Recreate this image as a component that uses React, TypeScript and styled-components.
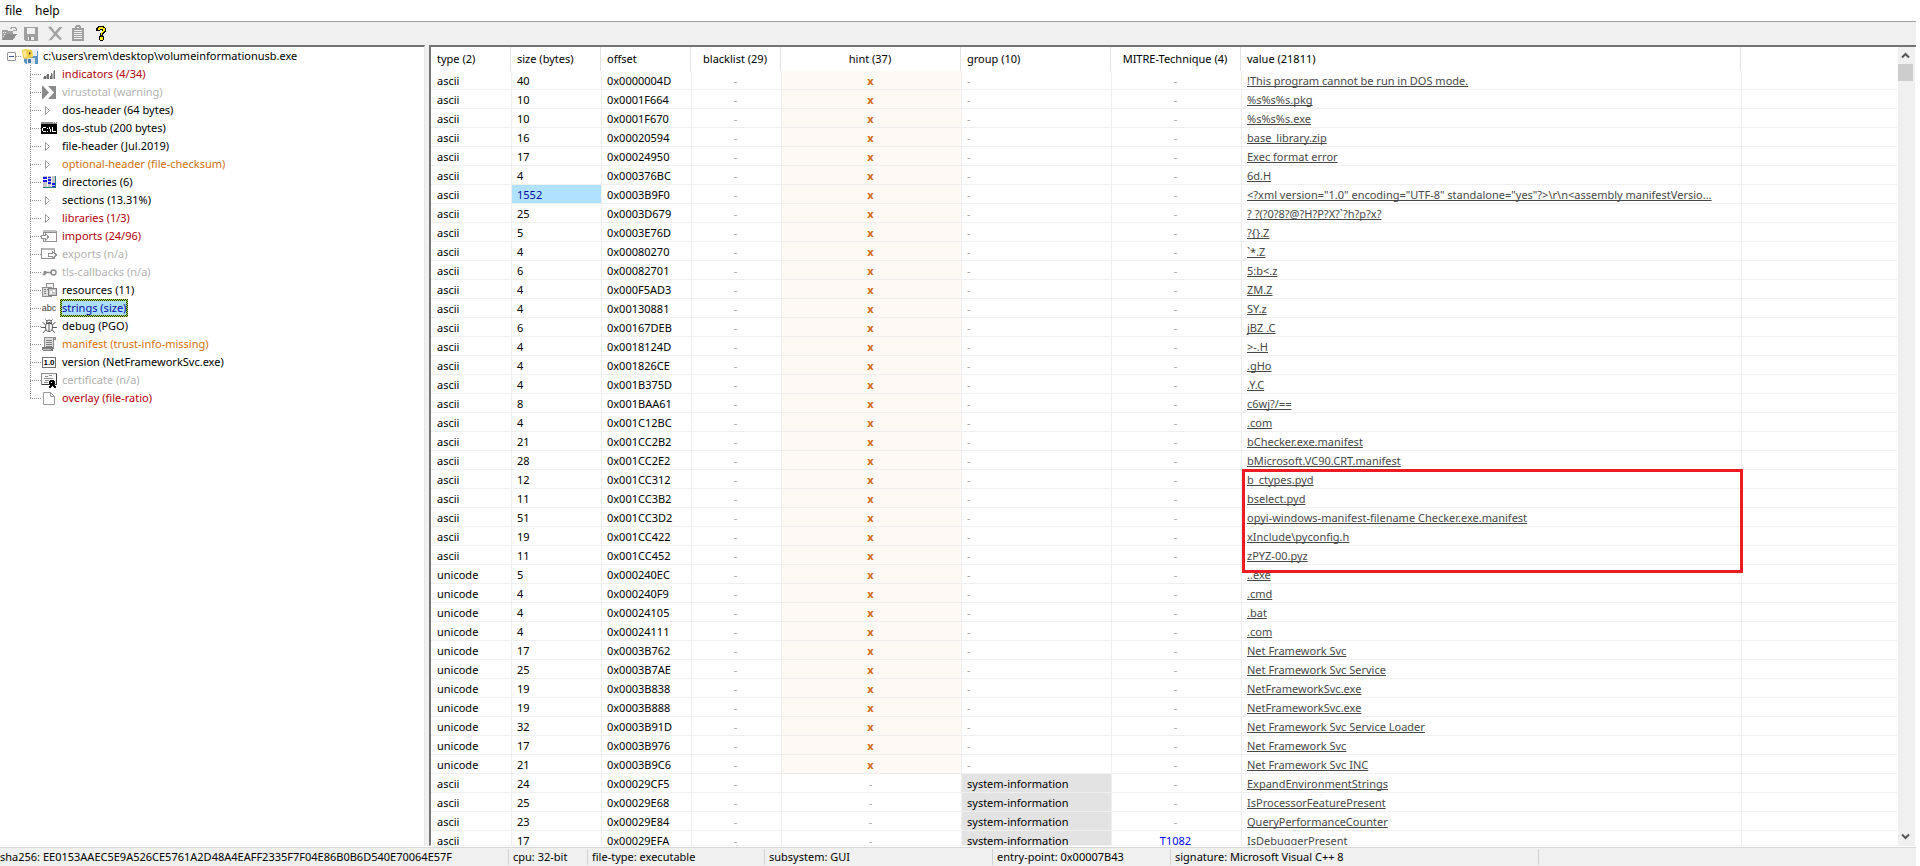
import React from "react";
import styled, { createGlobalStyle, css } from "styled-components";

const GlobalStyle = createGlobalStyle`
  * { box-sizing: border-box; }
  body {
    margin: 0;
    background: #fff;
    color: #000;
    font-family: "Noto Sans", "Open Sans", sans-serif;
    font-size: 11px;
    line-height: 18px;
  }
  button { font: inherit; color: inherit; border: 0; background: none; padding: 0; margin: 0; }
  svg { display: block; flex: none; }
`;

const tones = {
  normal: "#000",
  alert: "#b3000c",
  warn: "#d2700f",
  off: "#b2b2b2",
  selected: "#0a0aa8",
};
type Tone = keyof typeof tones;

/* ---------- window ---------- */

const Window = styled.div`
  display: flex;
  flex-direction: column;
  height: 100vh;
  padding-right: 4px;
  overflow: hidden;
`;

const MenuBar = styled.nav`
  display: flex;
  flex: none;
  gap: 13px;
  height: 21px;
  padding: 2px 5px;
`;

const MenuItem = styled.button`
  line-height: 18px;
  font-size: 12px;
`;

const ToolBar = styled.div`
  display: flex;
  flex: none;
  align-items: center;
  gap: 7px;
  height: 24px;
  border-top: 1px solid #a0a0a0;
  background: #f0f0f0;
`;

const ToolButton = styled.button`
  width: 17px;
  height: 17px;
`;

const Panes = styled.main`
  display: flex;
  flex: 1;
  min-height: 0;
  background: #f0f0f0;
`;

/* ---------- tree ---------- */

const TreePane = styled.aside`
  flex: none;
  width: 425px;
  background: #fff;
  border-top: 2px solid #747474;
  border-right: 1px solid #e6e6e6;
  border-bottom: 1px solid #f0f0f0;
  overflow: hidden;
`;

const RootRow = styled.div`
  display: flex;
  align-items: center;
  height: 18px;
  padding-left: 7px;
`;

const Toggle = styled.button`
  display: flex;
  align-items: center;
  justify-content: center;
  width: 9px;
  height: 9px;
  border: 1px solid #969696;
  border-radius: 1px;
  &::before { content: ""; width: 5px; height: 1px; background: #3c5a96; }
`;

const Dots = styled.span<{ $width: number }>`
  width: ${(p) => p.$width}px;
  height: 1px;
  flex: none;
  background: repeating-linear-gradient(90deg, #909090 0 1px, transparent 1px 2px);
`;

const RootLabel = styled.span`
  margin-left: 5px;
`;

const Branches = styled.ul`
  list-style: none;
  margin: 0;
  padding: 0 0 0 30px;
`;

const Branch = styled.li`
  display: flex;
  align-items: center;
  height: 18px;
  background: repeating-linear-gradient(180deg, #909090 0 1px, transparent 1px 2px) 0 0 / 1px 100% no-repeat;
  &:last-child { background-size: 1px 50%; }
`;

const BranchLabel = styled.button<{ $tone: Tone }>`
  margin-left: 3px;
  padding: 0 2px;
  line-height: 18px;
  color: ${(p) => tones[p.$tone]};
  ${(p) =>
    p.$tone === "selected" &&
    css`
      line-height: 14px;
      border: 2px solid transparent;
      padding: 0;
      background:
        linear-gradient(#abdfff, #abdfff) padding-box,
        repeating-conic-gradient(#20300a 0 25%, #b4e05a 0 50%) 0 0 / 2px 2px border-box;
    `}
`;

/* ---------- strings table ---------- */

const TablePane = styled.section`
  display: flex;
  flex: 1;
  min-width: 0;
  margin-left: 4px;
  background: #fff;
  border-top: 2px solid #747474;
  border-left: 2px solid #747474;
  border-bottom: 1px solid #f0f0f0;
  overflow: hidden;
`;

const TableView = styled.div`
  position: relative;
  flex: 1;
  min-width: 0;
  overflow: hidden;
`;

const Table = styled.table`
  width: 100%;
  table-layout: fixed;
  border-collapse: separate;
  border-spacing: 0;
`;

const Col = styled.col<{ $width?: number }>`
  width: ${(p) => (p.$width ? `${p.$width}px` : "auto")};
`;

const HeadCell = styled.th<{ $center?: boolean }>`
  height: 24px;
  padding: ${(p) => (p.$center ? "0 6px 0 5px" : "0 5px 0 6px")};
  border-right: 1px solid #e3e3e3;
  font-weight: 400;
  white-space: nowrap;
  text-align: ${(p) => (p.$center ? "center" : "left")};
  &:last-child { border-right: 0; }
`;

const fills = { none: "transparent", hint: "#fff9f5", group: "#e3e3e3", size: "#b0e2ff" };

const Cell = styled.td<{ $center?: boolean; $fill?: keyof typeof fills; $color?: string }>`
  height: 19px;
  padding: ${(p) => (p.$center ? "1px 7px 0 5px" : "1px 5px 0")};
  border-left: 1px solid #efefef;
  border-bottom: 1px solid #efefef;
  overflow: hidden;
  line-height: 17px;
  white-space: nowrap;
  text-align: ${(p) => (p.$center ? "center" : "left")};
  background: ${(p) => fills[p.$fill ?? "none"]};
  color: ${(p) => p.$color ?? "#000"};
  &:first-child { border-left: 0; padding-left: 6px; }
`;

const HintMark = styled.b`
  color: #cf6a10;
`;

const ValueLink = styled.a`
  color: #484848;
  text-decoration: underline;
  text-decoration-skip-ink: none;
  text-underline-offset: 1px;
`;

const Marker = styled.div`
  position: absolute;
  left: 811px;
  top: 422px;
  width: 501px;
  height: 104px;
  border: 3px solid #ed1c24;
  pointer-events: none;
`;

const ScrollBar = styled.div`
  display: flex;
  flex: none;
  flex-direction: column;
  width: 17px;
  margin: 0 1px;
  background: #f0f0f0;
`;

const ScrollArrow = styled.button`
  display: flex;
  flex: none;
  align-items: center;
  justify-content: center;
  width: 15px;
  height: 17px;
`;

const ScrollTrack = styled.div`
  flex: 1;
`;

const ScrollThumb = styled.div`
  width: 15px;
  height: 17px;
  background: #cdcdcd;
`;

/* ---------- status bar ---------- */

const StatusBar = styled.footer`
  display: flex;
  flex: none;
  height: 19px;
  margin-top: 1px;
  padding-top: 1px;
  border-top: 1px solid #d7d7d7;
  background: #f0f0f0;
`;

const StatusCell = styled.span<{ $width?: number }>`
  flex: ${(p) => (p.$width ? `none` : "1")};
  width: ${(p) => (p.$width ? `${p.$width}px` : "auto")};
  height: 16px;
  padding-left: 4px;
  border-left: 1px solid #d2d2d2;
  line-height: 16px;
  white-space: nowrap;
  &:first-child { border-left: 0; padding-left: 0; }
`;

/* ---------- icons ---------- */

const Ico = ({ children, size = 16 }: { children: React.ReactNode; size?: number }) => (
  <svg width={size} height={size} viewBox={`0 0 ${size} ${size}`} shapeRendering="crispEdges" aria-hidden="true">
    {children}
  </svg>
);

const OpenIcon = () => (
  <Ico size={17}>
    <path d="M2 5h5l1 1h5v3H6l-4 6z" fill="#a0a0a0" />
    <path d="M6 9h11l-4 6H2z" fill="#8f8f8f" />
    <path d="M3 7h1v1H3zM5 7h1v1H5zM4 9h1v1H4zM3 11h1v1H3z" fill="#f0f0f0" />
    <path d="M10 3h1V2h4v1h1v3M13 5h4" stroke="#a0a0a0" fill="none" />
  </Ico>
);
const SaveIcon = () => (
  <Ico size={17}>
    <path d="M0 2h14v14H1l-1-1z" fill="#a0a0a0" />
    <path d="M3 3h8v6H3z" fill="#f0f0f0" />
    <path d="M4 12h6v3H4z" fill="#f0f0f0" />
    <path d="M5 12h2v3H5z" fill="#8a8a8a" />
  </Ico>
);
const DeleteIcon = () => (
  <svg width="17" height="17" viewBox="0 0 17 17" aria-hidden="true">
    <path d="M0 2l3-.5 4 5.500 4.500-5h3L9 8.500l5 5.500-2 1L7.500 10.500 3.500 15l-3 .5L6 9z" fill="#a0a0a0" />
  </svg>
);
const ClipIcon = () => (
  <Ico size={17}>
    <path d="M0 3h3V1h1V0h4v1h1v2h3v13H0z" fill="#a0a0a0" />
    <path d="M2 5h8v1H2zM2 7h8v1H2zM2 9h8v1H2zM2 11h8v1H2zM2 13h8v1H2zM5 2h2v1H5z" fill="#f0f0f0" />
  </Ico>
);
const HelpIcon = () => (
  <Ico size={17}>
    <path d="M2 2h1V1h6v1h1v1h1v4h-1v1H9v1H8v2h1v4H8v1H5v-1H4v-4h1V8h1V7h1V5H5v1H1V3h1z" fill="#000" transform="translate(-1 0)" />
    <path d="M2 3h1V2h4v1h2v3H8v1H7v1H6v2H5V7h1V6h1V4H4v1H2z" fill="#ffee00" />
    <path d="M4 12h3v3H4z" fill="#ffee00" />
  </Ico>
);
const DiskIcon = () => (
  <svg width="16" height="16" viewBox="0 0 16 16" aria-hidden="true">
    <path d="M2 3h14v13H4l-2-2z" fill="#5b95c4" />
    <path d="M5 10h8v6H5z" fill="#dfe6ee" />
    <path d="M6 11h3v4H6z" fill="#4878a4" />
    <path d="M9 1h6v7H9z" fill="#e8eef4" />
    <path d="M0 2l4-1 6 1 1 7-7 2-3-1z" fill="#f6cf4a" />
    <path d="M1 3l3-1 1 7-3 1z" fill="#fbe694" />
    <path d="M7 4l2 1-2 2z" fill="#3c3c3c" />
  </svg>
);
const BarsIcon = () => (
  <Ico>
    <path d="M3 10h2v3H3zM6 8h2v5H6zM9 10h1v3H9zM10 7h1v6h-1zM13 4h1v9h-1z" fill="#6c6c6c" />
    <path d="M2 11h1v2H2zM5 9h1v4H5zM11 8h1v5h-1zM12 5h1v8h-1z" fill="#b0b0b0" />
  </Ico>
);
const VirusIcon = () => (
  <svg width="16" height="16" viewBox="0 0 16 16" aria-hidden="true">
    <path d="M1 2h14v13H1z" fill="#8a8a8a" />
    <path d="M2 2h5l6 6.500L7 15H2l6-6.500z" fill="#fff" />
  </svg>
);
const ArrowIcon = () => (
  <svg width="16" height="16" viewBox="0 0 16 16" aria-hidden="true">
    <path d="M4.500 4.500v8l4-4z" fill="#fff" stroke="#a0a0a0" />
  </svg>
);
const ConsoleIcon = () => (
  <Ico>
    <path d="M0 2h16v12H0z" fill="#000" />
    <path d="M0 2h16v2H0z" fill="#8a8a8a" />
    <path d="M12 2h1v1h-1zM14 2h1v1h-1z" fill="#fff" />
    <path d="M2 7h3v1H2zM2 11h3v1H2zM1 8h1v3H1zM6 8h1v1H6zM6 11h1v1H6zM8 7h1v2H8zM9 9h1v3H9zM11 7h1v5h-1zM12 11h3v1h-3z" fill="#fff" />
  </Ico>
);
const DirIcon = () => (
  <Ico>
    <path d="M2 2h13v12H2z" fill="#c6c6c6" />
    <path d="M2 3h4v2H2zM2 6h4v2H2zM7 5h4v2H7zM7 8h4v2H7zM7 3h3v1H7zM11 9h3v2h-3zM11 12h3v1h-3z" fill="#1414e6" />
    <path d="M6 2h1v12H6zM10 2h1v12h-1zM2 5h4v1H2z" fill="#f4f4f4" />
    <path d="M14 2h1v12h-1zM2 13h13v1H2z" fill="#2a8080" />
  </Ico>
);
const ImportIcon = () => (
  <Ico>
    <path d="M2 3h14v11H2z" fill="#909090" />
    <path d="M3 5h12v8H3z" fill="#fff" />
    <path d="M2 2h13v2H2z" fill="#c2c2c2" />
    <path d="M0 6h2v6H0z" fill="#fff" />
    <path d="M0.500 7.500h4v-2l3 3.500-3 3.500v-2h-4z" fill="#fff" stroke="#909090" />
  </Ico>
);
const ExportIcon = () => (
  <Ico>
    <path d="M0 2h14v11H0z" fill="#909090" />
    <path d="M1 4h12v8H1z" fill="#fff" />
    <path d="M1 2h13v2H1z" fill="#b8b8b8" />
    <path d="M7.500 7.500h4v-2l4 3.500-4 3.500v-2h-4z" fill="#fff" stroke="#909090" />
  </Ico>
);
const TlsIcon = () => (
  <svg width="16" height="16" viewBox="0 0 16 16" fill="none" stroke="#8c8c8c" strokeWidth="1.500" aria-hidden="true">
    <circle cx="12.500" cy="8.500" r="2.500" />
    <path d="M10 8.500H4M1.500 10.500h3" />
    <circle cx="4" cy="8.500" r="1" />
  </svg>
);
const ResourceIcon = () => (
  <Ico>
    <path d="M5.500 1.500h7v6h-7z" stroke="#909090" fill="#f2f2f2" />
    <path d="M1.500 5.500h9v9h-9z" stroke="#909090" fill="#dcdcdc" />
    <path d="M3 7h2v1H3zM6 7h2v1H6zM3 9h2v1H3zM3 11h2v1H3z" fill="#808080" />
    <path d="M7.500 6.500h8v7h-8z" stroke="#808080" fill="#c8c8c8" />
    <path d="M9 9h2v3H9zM12 8h2v2h-2z" fill="#fff" />
  </Ico>
);
const AbcBadge = styled.span`
  width: 16px;
  flex: none;
  color: #3c3c3c;
  font-family: "Liberation Sans", sans-serif;
  font-size: 9px;
  text-align: center;
`;
const BugIcon = () => (
  <svg width="16" height="16" viewBox="0 0 16 16" fill="none" stroke="#5a5a5a" aria-hidden="true">
    <ellipse cx="8" cy="9" rx="3.500" ry="4.500" fill="#f4f4f4" />
    <path d="M8 6v7M5 5.500h6M5.500 5a2.500 3 0 0 1 5 0M4.500 1.500L6 3M11.500 1.500L10 3M4.500 7L1.500 4M11.500 7L14.500 4M4.500 9.500H0M11.500 9.500H16M5 11.500L2 15M11 11.500L14 15" />
  </svg>
);
const ManifestIcon = () => (
  <Ico>
    <path d="M3 1h12v3h-2v9H3z" fill="#8c8c8c" />
    <path d="M1 11h11v4H2l-1-1z" fill="#7c7c7c" />
    <path d="M4 2h8v9H4z" fill="#dcdcdc" />
    <path d="M5 4h6v1H5zM5 6h6v1H5zM5 8h6v1H5zM5 10h6v1H5z" fill="#808080" />
    <path d="M13 2h1v1h-1zM2 13h8v1H2z" fill="#c8c8c8" />
  </Ico>
);
const VersionBadge = styled.span`
  width: 14px;
  height: 11px;
  margin: 0 1px;
  flex: none;
  border: 1px solid #707070;
  font-family: "Liberation Sans", sans-serif;
  font-size: 8px;
  font-weight: 700;
  line-height: 9px;
  text-align: center;
`;
const CertIcon = () => (
  <Ico>
    <path d="M0 1h16v12H0z" fill="#8c8c8c" />
    <path d="M1 2h14v10H1z" fill="#f4f4f4" />
    <path d="M15 2h1v11h-1zM1 12h14v1H1z" fill="#3c3c3c" />
    <path d="M4 4h3v1H4zM8 3h3v1H8zM3 6h9v1H3zM4 8h4v1H4zM3 10h4v1H3z" fill="#909090" />
    <path d="M9 8h4v1h1v3h-1v1h1v1h1v2h-2v-1h-1v-1h-1v1h-1v1H8v-2h1v-2H8V9h1z" fill="#000" />
    <path d="M10 10h1v1h-1z" fill="#fff" />
  </Ico>
);
const PageIcon = () => (
  <svg width="16" height="16" viewBox="0 0 16 16" fill="#fff" stroke="#9a9a9a" aria-hidden="true">
    <path d="M2.500 2.500h7l4 4v8h-11zM9.500 2.500v4h4" />
  </svg>
);
const Chevron = ({ up }: { up?: boolean }) => (
  <svg width="9" height="9" viewBox="0 0 9 9" fill="none" stroke="#555" strokeWidth="2" aria-hidden="true">
    <path d={up ? "M1 6.500l3.500-3.500L8 6.500" : "M1 2.500L4.500 6 8 2.500"} />
  </svg>
);

/* ---------- data ---------- */

const branches: [React.ReactNode, string, Tone][] = [
  [<BarsIcon />, "indicators (4/34)", "alert"],
  [<VirusIcon />, "virustotal (warning)", "off"],
  [<ArrowIcon />, "dos-header (64 bytes)", "normal"],
  [<ConsoleIcon />, "dos-stub (200 bytes)", "normal"],
  [<ArrowIcon />, "file-header (Jul.2019)", "normal"],
  [<ArrowIcon />, "optional-header (file-checksum)", "warn"],
  [<DirIcon />, "directories (6)", "normal"],
  [<ArrowIcon />, "sections (13.31%)", "normal"],
  [<ArrowIcon />, "libraries (1/3)", "alert"],
  [<ImportIcon />, "imports (24/96)", "alert"],
  [<ExportIcon />, "exports (n/a)", "off"],
  [<TlsIcon />, "tls-callbacks (n/a)", "off"],
  [<ResourceIcon />, "resources (11)", "normal"],
  [<AbcBadge>abc</AbcBadge>, "strings (size)", "selected"],
  [<BugIcon />, "debug (PGO)", "normal"],
  [<ManifestIcon />, "manifest (trust-info-missing)", "warn"],
  [<VersionBadge>1.0</VersionBadge>, "version (NetFrameworkSvc.exe)", "normal"],
  [<CertIcon />, "certificate (n/a)", "off"],
  [<PageIcon />, "overlay (file-ratio)", "alert"],
];

const columns: { label: string; width?: number; center?: boolean }[] = [
  { label: "type (2)", width: 80 },
  { label: "size (bytes)", width: 90 },
  { label: "offset", width: 90 },
  { label: "blacklist (29)", width: 90, center: true },
  { label: "hint (37)", width: 180, center: true },
  { label: "group (10)", width: 150 },
  { label: "MITRE-Technique (4)", width: 130, center: true },
  { label: "value (21811)", width: 500 },
  { label: "" },
];

type StringRow = { type: string; size: number; offset: string; value: string; group?: string; mitre?: string };
const s = (type: string, size: number, offset: string, value: string, group?: string, mitre?: string): StringRow => ({
  type, size, offset, value, group, mitre,
});

const rows: StringRow[] = [
  s("ascii", 40, "0x0000004D", "!This program cannot be run in DOS mode."),
  s("ascii", 10, "0x0001F664", "%s%s%s.pkg"),
  s("ascii", 10, "0x0001F670", "%s%s%s.exe"),
  s("ascii", 16, "0x00020594", "base_library.zip"),
  s("ascii", 17, "0x00024950", "Exec format error"),
  s("ascii", 4, "0x000376BC", "6d.H"),
  s("ascii", 1552, "0x0003B9F0", '<?xml version="1.0" encoding="UTF-8" standalone="yes"?>\\r\\n<assembly manifestVersio...'),
  s("ascii", 25, "0x0003D679", "? ?(?0?8?@?H?P?X?`?h?p?x?"),
  s("ascii", 5, "0x0003E76D", "?{}.Z"),
  s("ascii", 4, "0x00080270", "`*.Z"),
  s("ascii", 6, "0x00082701", "5:b<.z"),
  s("ascii", 4, "0x000F5AD3", "ZM.Z"),
  s("ascii", 4, "0x00130881", "SY.z"),
  s("ascii", 6, "0x00167DEB", "jBZ .C"),
  s("ascii", 4, "0x0018124D", ">-.H"),
  s("ascii", 4, "0x001826CE", ".gHo"),
  s("ascii", 4, "0x001B375D", ".Y.C"),
  s("ascii", 8, "0x001BAA61", "c6wj?/=="),
  s("ascii", 4, "0x001C12BC", ".com"),
  s("ascii", 21, "0x001CC2B2", "bChecker.exe.manifest"),
  s("ascii", 28, "0x001CC2E2", "bMicrosoft.VC90.CRT.manifest"),
  s("ascii", 12, "0x001CC312", "b_ctypes.pyd"),
  s("ascii", 11, "0x001CC3B2", "bselect.pyd"),
  s("ascii", 51, "0x001CC3D2", "opyi-windows-manifest-filename Checker.exe.manifest"),
  s("ascii", 19, "0x001CC422", "xInclude\\pyconfig.h"),
  s("ascii", 11, "0x001CC452", "zPYZ-00.pyz"),
  s("unicode", 5, "0x000240EC", "..exe"),
  s("unicode", 4, "0x000240F9", ".cmd"),
  s("unicode", 4, "0x00024105", ".bat"),
  s("unicode", 4, "0x00024111", ".com"),
  s("unicode", 17, "0x0003B762", "Net Framework Svc"),
  s("unicode", 25, "0x0003B7AE", "Net Framework Svc Service"),
  s("unicode", 19, "0x0003B838", "NetFrameworkSvc.exe"),
  s("unicode", 19, "0x0003B888", "NetFrameworkSvc.exe"),
  s("unicode", 32, "0x0003B91D", "Net Framework Svc Service Loader"),
  s("unicode", 17, "0x0003B976", "Net Framework Svc"),
  s("unicode", 21, "0x0003B9C6", "Net Framework Svc INC"),
  s("ascii", 24, "0x00029CF5", "ExpandEnvironmentStrings", "system-information"),
  s("ascii", 25, "0x00029E68", "IsProcessorFeaturePresent", "system-information"),
  s("ascii", 23, "0x00029E84", "QueryPerformanceCounter", "system-information"),
  s("ascii", 17, "0x00029EFA", "IsDebuggerPresent", "system-information", "T1082"),
];

const status: [string, number?][] = [
  ["sha256: EE0153AAEC5E9A526CE5761A2D48A4EAFF2335F7F04E86B0B6D540E70064E57F", 508],
  ["cpu: 32-bit", 79],
  ["file-type: executable", 177],
  ["subsystem: GUI", 228],
  ["entry-point: 0x00007B43", 178],
  ["signature: Microsoft Visual C++ 8", 368],
  [""],
];

const muted = "#a4a4a4";

export default function App() {
  return (
    <Window>
      <GlobalStyle />
      <MenuBar>
        <MenuItem>file</MenuItem>
        <MenuItem>help</MenuItem>
      </MenuBar>
      <ToolBar role="toolbar">
        <ToolButton aria-label="open"><OpenIcon /></ToolButton>
        <ToolButton aria-label="save"><SaveIcon /></ToolButton>
        <ToolButton aria-label="delete"><DeleteIcon /></ToolButton>
        <ToolButton aria-label="copy"><ClipIcon /></ToolButton>
        <ToolButton aria-label="about"><HelpIcon /></ToolButton>
      </ToolBar>
      <Panes>
        <TreePane>
          <RootRow>
            <Toggle aria-label="collapse" />
            <Dots $width={6} />
            <DiskIcon />
            <RootLabel>c:\users\rem\desktop\volumeinformationusb.exe</RootLabel>
          </RootRow>
          <Branches>
            {branches.map(([icon, label, tone]) => (
              <Branch key={label}>
                <Dots $width={11} />
                {icon}
                <BranchLabel $tone={tone}>{label}</BranchLabel>
              </Branch>
            ))}
          </Branches>
        </TreePane>
        <TablePane>
          <TableView>
            <Table>
              <colgroup>
                {columns.map((c) => <Col key={c.label} $width={c.width} />)}
              </colgroup>
              <thead>
                <tr>
                  {columns.map((c) => <HeadCell key={c.label} $center={c.center}>{c.label}</HeadCell>)}
                </tr>
              </thead>
              <tbody>
                {rows.map((r) => {
                  const large = r.size > 1000;
                  return (
                    <tr key={r.offset}>
                      <Cell>{r.type}</Cell>
                      <Cell $fill={large ? "size" : "none"} $color={large ? tones.selected : undefined}>{r.size}</Cell>
                      <Cell>{r.offset}</Cell>
                      <Cell $center $color={muted}>-</Cell>
                      <Cell $center $fill={r.group ? "none" : "hint"} $color={muted}>
                        {r.group ? "-" : <HintMark>x</HintMark>}
                      </Cell>
                      <Cell $fill={r.group ? "group" : "none"} $color={r.group ? undefined : muted}>{r.group ?? "-"}</Cell>
                      <Cell $center $color={r.mitre ? "#0000ff" : muted}>{r.mitre ?? "-"}</Cell>
                      <Cell><ValueLink href="#">{r.value}</ValueLink></Cell>
                      <Cell />
                    </tr>
                  );
                })}
              </tbody>
            </Table>
            <Marker />
          </TableView>
          <ScrollBar>
            <ScrollArrow aria-label="scroll up"><Chevron up /></ScrollArrow>
            <ScrollTrack><ScrollThumb /></ScrollTrack>
            <ScrollArrow aria-label="scroll down"><Chevron /></ScrollArrow>
          </ScrollBar>
        </TablePane>
      </Panes>
      <StatusBar>
        {status.map(([text, width], i) => <StatusCell key={i} $width={width}>{text}</StatusCell>)}
      </StatusBar>
    </Window>
  );
}
